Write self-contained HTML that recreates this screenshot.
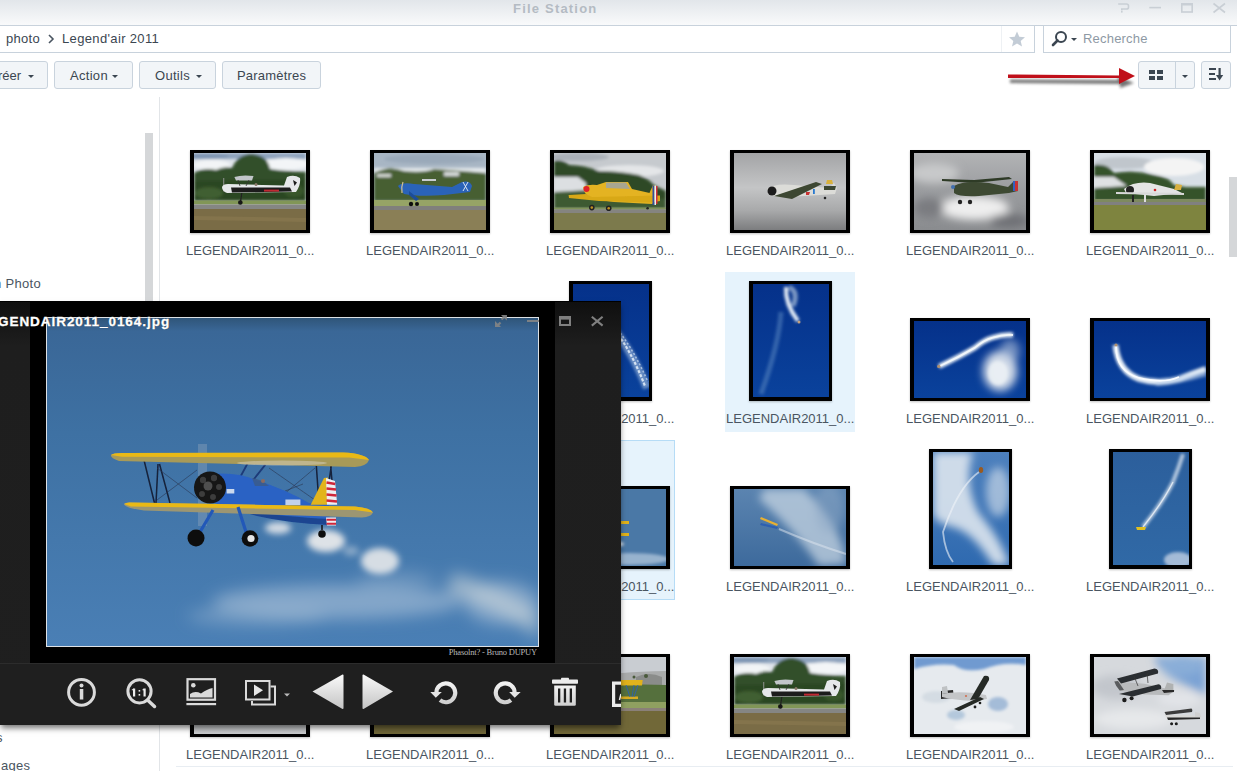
<!DOCTYPE html>
<html><head><meta charset="utf-8">
<style>
*{margin:0;padding:0;box-sizing:border-box}
html,body{width:1237px;height:771px;overflow:hidden;background:#fff;font-family:"Liberation Sans",sans-serif;position:relative}
.abs{position:absolute}
svg{display:block}
#title{left:0;top:0;width:1237px;height:26px;background:linear-gradient(#e2e6ea,#f9fafb);border-bottom:1px solid #c6d0da}
#title .t{left:513px;top:1px;font-size:13px;font-weight:bold;color:#b4bbc3;letter-spacing:1.2px}
#crumb{left:-2px;top:25px;width:1037px;height:28px;border:1px solid #c8d2dc;background:#fff}
#search{left:1043px;top:25px;width:188px;height:28px;border:1px solid #c8d2dc;background:#fff}
.txt{font-size:13px;color:#3b4651;white-space:nowrap}
.btn{height:28px;border:1px solid #c9d3dd;border-radius:3px;background:#f2f5f8;top:61px}
.btn .txt{position:absolute;top:6px}
.caret{position:absolute;width:0;height:0;border-left:3px solid transparent;border-right:3px solid transparent;border-top:3px solid #3b4651}
.sel{background:#e6f3fc}
.sel2{background:#e6f3fc;border:1px solid #b6dcf6}
.lbl{font-size:13px;color:#4a5561;white-space:nowrap;letter-spacing:0px}
.th{background:#000;box-shadow:0 1px 2px rgba(0,0,0,.25)}
.th svg{position:absolute}

</style></head><body>
<svg width="0" height="0" style="position:absolute"><defs>
<filter id="fb1" x="-20%" y="-20%" width="140%" height="140%"><feGaussianBlur stdDeviation="0.5"/></filter>
<filter id="fb2" x="-20%" y="-20%" width="140%" height="140%"><feGaussianBlur stdDeviation="1.5"/></filter>
<filter id="fb4" x="-30%" y="-30%" width="160%" height="160%"><feGaussianBlur stdDeviation="4"/></filter>
</defs></svg>
<div id="title" class="abs"><div class="t abs">File Station</div>
  <svg class="abs" style="left:1100px;top:0" width="137" height="20" viewBox="0 0 137 20">
    <g fill="none" stroke="#c9cfd5" stroke-width="1.6">
      <path d="M18.2 4 H26.5 Q28.5 4 28.5 6 V7.2 Q28.5 9 26.5 9 H21.8 V10.5"/>
      <path d="M49.3 7.6 H61"/>
      <rect x="81.8" y="4" width="10.4" height="8"/>
      <path d="M113.5 3.5 L125 12.5 M125 3.5 L113.5 12.5"/>
    </g>
    <rect x="81" y="3.1" width="12" height="2.4" fill="#c9cfd5"/>
    <rect x="21" y="11" width="1.6" height="1.6" fill="#c9cfd5"/>
  </svg>
</div>
<div id="crumb" class="abs"></div>
<div class="abs" style="left:1001px;top:26px;width:1px;height:26px;background:#eef1f4"></div>
<svg class="abs" style="left:1007px;top:30px" width="20" height="18" viewBox="0 0 20 18"><path d="M10 1.5 L12.3 6.8 L18 7.2 L13.7 10.9 L15 16.5 L10 13.5 L5 16.5 L6.3 10.9 L2 7.2 L7.7 6.8 Z" fill="#c3ccd6"/></svg>
<div class="abs txt" style="left:6px;top:31px;letter-spacing:0.3px">photo</div>
<svg class="abs" style="left:47px;top:34px" width="8" height="10" viewBox="0 0 8 10"><path d="M2 1 L6 5 L2 9" fill="none" stroke="#4a5561" stroke-width="1.6"/></svg>
<div class="abs txt" style="left:62px;top:31px;letter-spacing:0.35px">Legend'air 2011</div>
<div id="search" class="abs"></div>
<svg class="abs" style="left:1050px;top:30px" width="30" height="18" viewBox="0 0 30 18">
  <circle cx="11" cy="7" r="5" fill="none" stroke="#3b4651" stroke-width="2"/>
  <path d="M7.5 10.5 L3 15" stroke="#3b4651" stroke-width="2.6" stroke-linecap="round"/>
  <path d="M21 8 L27 8 L24 11 Z" fill="#3b4651"/>
</svg>
<div class="abs txt" style="left:1083px;top:31px;color:#8e99a4;letter-spacing:0.2px">Recherche</div>

<!-- toolbar buttons -->
<div class="abs btn" style="left:-10px;width:58px"><div class="txt" style="left:7px">réer</div><div class="caret" style="left:37px;top:13px"></div></div>
<div class="abs btn" style="left:54px;width:79px"><div class="txt" style="left:15px;letter-spacing:0.3px">Action</div><div class="caret" style="left:57px;top:13px"></div></div>
<div class="abs btn" style="left:139px;width:77px"><div class="txt" style="left:15px;letter-spacing:0.3px">Outils</div><div class="caret" style="left:56px;top:13px"></div></div>
<div class="abs btn" style="left:222px;width:99px"><div class="txt" style="left:14px;letter-spacing:0.2px">Paramètres</div></div>

<!-- right view buttons -->
<svg class="abs" style="left:1000px;top:60px" width="140" height="32" viewBox="0 0 140 32">
  <defs><filter id="ash" x="-10%" y="-50%" width="120%" height="250%"><feGaussianBlur stdDeviation="1.6"/></filter></defs>
  <g filter="url(#ash)" fill="#000" opacity="0.55">
    <path d="M10 19.5 L118 20 L118 16.5 L134 23 L120 28 L120 24 L10 23 Z"/>
  </g>
  <path d="M8 14.5 L119 15.5 L119 8 L135 16 L119 24 L119 18 L8 18 Z" fill="#c0101a"/>
</svg>
<div class="abs btn" style="left:1138px;width:57px"></div>
<div class="abs" style="left:1175px;top:62px;width:1px;height:26px;background:#c9d3dd"></div>
<div class="abs" style="left:1149px;top:70px;width:6px;height:4px;background:#3b4651"></div>
<div class="abs" style="left:1157px;top:70px;width:6px;height:4px;background:#3b4651"></div>
<div class="abs" style="left:1149px;top:76px;width:6px;height:4px;background:#3b4651"></div>
<div class="abs" style="left:1157px;top:76px;width:6px;height:4px;background:#3b4651"></div>
<div class="caret" style="left:1182px;top:75px"></div>
<div class="abs btn" style="left:1201px;width:30px"></div>
<svg class="abs" style="left:1206px;top:65px" width="20" height="20" viewBox="0 0 20 20">
  <g fill="#3b4651"><rect x="3" y="3" width="7" height="2"/><rect x="3" y="8" width="6" height="2"/><rect x="3" y="13" width="7" height="2"/>
  <rect x="12.5" y="3" width="2.2" height="9"/><path d="M10 10 L17.2 10 L13.6 15.5 Z"/></g>
</svg>

<!-- sidebar -->
<div class="abs txt" style="left:-6px;top:276px;color:#4a5561;letter-spacing:0.3px">n Photo</div>
<div class="abs txt" style="left:-4px;top:730px;color:#4a5561">s</div>
<div class="abs txt" style="left:1px;top:758px;color:#4a5561;letter-spacing:0.3px">ages</div>
<div class="abs" style="left:145px;top:133px;width:8px;height:580px;background:#d5d7d9"></div>
<div class="abs" style="left:159px;top:97px;width:1px;height:680px;background:#e2e5e8"></div>
<div class="abs" style="left:1229px;top:177px;width:8px;height:80px;background:#d5d7d9"></div>
<div class="abs" style="left:176px;top:766px;width:1057px;height:1px;background:#e8edf2"></div>

<div class="abs th" style="left:190px;top:150px;width:120px;height:83px"><svg style="left:4px;top:3px" width="112" height="77" viewBox="0 0 112 77" preserveAspectRatio="none">
<rect width="112" height="77" fill="#dfe4ea"/>
<g filter="url(#fb2)">
<rect width="112" height="6" fill="#8ea3bd"/>
<ellipse cx="10" cy="3" rx="25" ry="3" fill="#7f96b4"/>
<ellipse cx="18" cy="12" rx="18" ry="5" fill="#f2f4f6"/>
<ellipse cx="92" cy="11" rx="22" ry="6" fill="#f3f5f7"/>
<path d="M0 20 Q10 14 22 17 Q30 13 38 15 Q44 1 58 1 Q74 3 76 16 Q90 18 112 19 L112 48 L0 48 Z" fill="#33502a"/>
<path d="M0 28 L112 26 L112 48 L0 48 Z" fill="#28421f" opacity="0.7"/>
<ellipse cx="15" cy="40" rx="14" ry="6" fill="#4a6a36" opacity="0.7"/>
<ellipse cx="100" cy="38" rx="10" ry="6" fill="#3e5e30" opacity="0.7"/>
</g>
<rect y="47.5" width="112" height="4" fill="#819657"/>
<rect y="51.5" width="112" height="4.5" fill="#858684"/>
<rect y="56" width="112" height="21" fill="#7a6c46"/>
<path d="M0 63 L112 65 L112 69 L0 67Z" fill="#8a7a50" opacity="0.6"/>
<g filter="url(#fb1)">
<rect x="29" y="25" width="1.3" height="13.5" fill="#999" opacity="0.7"/>
<path d="M28 34 Q29 31 34 31 L90 32.5 L93 24 Q100 21 106 25 Q107 32 102 39 L60 39.5 L33 40 Q28 38 28 34 Z" fill="#e6e8ea"/>
<path d="M37 34.5 L96 34.5 L98 38.5 L38 39.5 Z" fill="#1a1a1a"/>
<path d="M70 36.6 L85 36.6 L85 38.6 L70 38.6 Z" fill="#c02a30"/>
<path d="M40.4 24 Q48 21.5 59.5 23 L58 27.4 L42 27.4 Z" fill="#c2c6ca"/>
<path d="M44 27 L46 33 M55 27 L52 33" stroke="#333" stroke-width="0.8"/>
<circle cx="62" cy="31.5" r="1.5" fill="#8a7a6a"/>
<path d="M47.8 40 L46.6 48" stroke="#222" stroke-width="1.2"/>
<circle cx="46.3" cy="49.5" r="2.3" fill="#151515"/>
<path d="M99 27 L103 29.5 L100.5 33 Z" fill="#1a1a1a"/>
</g>
</svg></div>
<div class="abs lbl" style="left:186px;top:243px">LEGENDAIR2011_0...</div>
<div class="abs th" style="left:370px;top:150px;width:120px;height:83px"><svg style="left:4px;top:3px" width="112" height="77" viewBox="0 0 112 77" preserveAspectRatio="none">
<rect width="112" height="77" fill="#a8b6c4"/>
<g filter="url(#fb2)">
<ellipse cx="60" cy="6" rx="50" ry="5" fill="#9aa9b9"/>
<rect y="15" width="112" height="7" fill="#e8ecef"/>
<path d="M0 20 Q15 12 30 18 Q50 20 60 16 Q90 18 112 20 L112 48 L0 48 Z" fill="#465f32"/>
<rect x="3" y="21" width="14" height="3" fill="#d8dcd8"/>
<rect x="70" y="19" width="15" height="4" fill="#d8dcdc"/>
</g>
<rect y="47" width="112" height="6" fill="#96a466"/>
<rect y="53" width="112" height="4" fill="#80807c"/>
<rect y="57" width="112" height="20" fill="#8a7f56"/>
<g filter="url(#fb1)">
<path d="M24 33 Q28 29 40 31 L78 34 L88 29 Q96 27 98 33 L96 39 L70 42 Q45 44 30 41 Z" fill="#2c64b8"/>
<path d="M35 38 L45 46 L42 48 L35 42 Z" fill="#1f4e9a"/>
<path d="M48 26 L62 26 L62 28 L48 28Z" fill="#c8ccd0"/>
<path d="M29 29 Q27 34 28 40" stroke="#d0c090" stroke-width="1.2" fill="none"/>
<circle cx="37" cy="51" r="2.2" fill="#111"/><circle cx="43" cy="51" r="2" fill="#111"/>
<path d="M89 29 L94 38 M94 29 L89 38" stroke="#e8eef6" stroke-width="0.9"/>
</g>
</svg></div>
<div class="abs lbl" style="left:366px;top:243px">LEGENDAIR2011_0...</div>
<div class="abs th" style="left:550px;top:150px;width:120px;height:83px"><svg style="left:4px;top:3px" width="112" height="77" viewBox="0 0 112 77" preserveAspectRatio="none">
<rect width="112" height="77" fill="#c6cace"/>
<g filter="url(#fb2)">
<ellipse cx="75" cy="18" rx="35" ry="6" fill="#e4e6e8"/>
<ellipse cx="25" cy="4" rx="30" ry="4" fill="#aab0b8"/>
<path d="M0 8 Q8 6 15 12 Q30 12 45 18 Q65 18 85 22 Q95 26 100 32 L112 38 L112 56 L0 56 Z" fill="#2f4827"/>
<path d="M0 24 L24 24 L32 30 L32 39 L0 39 Z" fill="#dcdfe2"/>
<path d="M0 39 L36 37 L60 45 L112 46 L112 56 L0 56 Z" fill="#3e5a30"/>
</g>
<rect y="54.5" width="112" height="2" fill="#7f925a"/>
<rect y="56.5" width="112" height="3.5" fill="#858480"/>
<rect y="60" width="112" height="17" fill="#7c7a4c"/>
<g filter="url(#fb1)">
<path d="M29 34 Q34 31 43 32 L52 29 L74 29 L78 36 L100 41 L104 46 L98 51 L60 49 L38 46 Q30 42 29 34 Z" fill="#e4b322"/>
<path d="M52 29.5 L72 29.5 L76 36 L52 35 Z" fill="#9da3a3" opacity="0.85"/>
<path d="M14.6 42 L32 41 L38 44 L106 42.5 L106 48 L98 49.6 L45 48 L15 45 Z" fill="#d8a818"/>
<circle cx="32.5" cy="36" r="3" fill="#e0202a"/>
<path d="M95 41 L99 32 L102 33 L102 42 Z" fill="#e2b020"/>
<path d="M98.5 32.5 L100.5 32.5 L100.5 52 L98.5 52 Z" fill="#3050a0"/>
<path d="M100.5 32.5 L102 32.5 L102 52 L100.5 52Z" fill="#f0f0f0"/><path d="M102 33 L103.5 33 L103.5 51 L102 51Z" fill="#d0303a"/>
<circle cx="37.8" cy="54.6" r="2.8" fill="#222"/><circle cx="37.8" cy="54.6" r="1.3" fill="#c09020"/>
<circle cx="54.7" cy="55.2" r="2.8" fill="#222"/><circle cx="54.7" cy="55.2" r="1.3" fill="#c09020"/>
<circle cx="93.6" cy="55.2" r="1.3" fill="#222"/>
</g>
</svg></div>
<div class="abs lbl" style="left:546px;top:243px">LEGENDAIR2011_0...</div>
<div class="abs th" style="left:730px;top:150px;width:120px;height:83px"><svg style="left:4px;top:3px" width="112" height="77" viewBox="0 0 112 77" preserveAspectRatio="none">
<defs><linearGradient id="g4" x1="0" y1="0" x2="0" y2="1"><stop offset="0" stop-color="#a3a4a6"/><stop offset="0.45" stop-color="#c4c5c6"/><stop offset="0.75" stop-color="#a8a9aa"/><stop offset="1" stop-color="#7c7d7f"/></linearGradient></defs>
<rect width="112" height="77" fill="url(#g4)"/>
<g filter="url(#fb1)">
<path d="M33 36 Q40 30 60 32 L95 35 L100 30 L103 35 L101 41 L70 43 Q45 45 35 42 Z" fill="#dcdcd8"/>
<circle cx="38" cy="38" r="4.5" fill="#1c1c1c"/>
<path d="M40 43 L82 29 L88 31 L58 46 Z" fill="#3d4630"/>
<path d="M90 33 L102 33 L101 37 L90 37Z" fill="#3d4630"/>
<path d="M93 27 L98 27 L99 31 L92 31Z" fill="#d9b13a"/>
<rect x="79" y="36" width="1.8" height="5" fill="#2a7ad0"/>
<path d="M72 39 L76 39 L75 42 L72 42Z" fill="#c83030"/>
<circle cx="91" cy="45" r="1.3" fill="#222"/>
</g>
</svg></div>
<div class="abs lbl" style="left:726px;top:243px">LEGENDAIR2011_0...</div>
<div class="abs th" style="left:910px;top:150px;width:120px;height:83px"><svg style="left:4px;top:3px" width="112" height="77" viewBox="0 0 112 77" preserveAspectRatio="none">
<defs><linearGradient id="g5" x1="0" y1="0" x2="0" y2="1"><stop offset="0" stop-color="#b2b3b5"/><stop offset="0.5" stop-color="#9a9c9f"/><stop offset="1" stop-color="#8a8c8f"/></linearGradient></defs>
<rect width="112" height="77" fill="url(#g5)"/>
<g filter="url(#fb4)">
<ellipse cx="60" cy="55" rx="35" ry="12" fill="#eeeeee"/>
<ellipse cx="20" cy="20" rx="25" ry="10" fill="#c8c9ca"/>
<ellipse cx="95" cy="68" rx="20" ry="7" fill="#6e7074"/>
<ellipse cx="15" cy="55" rx="15" ry="10" fill="#7a7c80"/>
</g>
<g filter="url(#fb1)">
<path d="M28 26 L60 27 L95 24 L98 26 L60 30 L28 28 Z" fill="#2f3a28"/>
<path d="M40 33 Q50 27 75 30 L94 34 L100 28 L104 38 L95 40 L65 43 Q45 44 40 40 Z" fill="#3d4a33"/>
<circle cx="39" cy="34" r="2" fill="#4070b0"/>
<circle cx="46" cy="49" r="2.2" fill="#222"/><circle cx="56" cy="49" r="2.2" fill="#222"/>
<path d="M101 28 L104 28 L104 38 L101 38Z" fill="#c83030"/>
<path d="M99 28 L101 28 L101 38 L99 38Z" fill="#3060c0"/>
</g>
</svg></div>
<div class="abs lbl" style="left:906px;top:243px">LEGENDAIR2011_0...</div>
<div class="abs th" style="left:1090px;top:150px;width:120px;height:83px"><svg style="left:4px;top:3px" width="112" height="77" viewBox="0 0 112 77" preserveAspectRatio="none">
<rect width="112" height="77" fill="#d8dfe6"/>
<g filter="url(#fb2)">
<ellipse cx="30" cy="10" rx="30" ry="6" fill="#c0c6cc"/>
<ellipse cx="80" cy="14" rx="30" ry="9" fill="#f4f4f4"/>
<path d="M0 12 Q14 10 20 20 Q40 16 60 22 Q75 24 80 32 L92 34 L112 34 L112 48 L0 48 Z" fill="#36532a"/>
<path d="M0 24 L20 24 L33 33 L0 35 Z" fill="#dfe1e3"/>
</g>
<rect y="46" width="112" height="3" fill="#7e8a60"/>
<rect y="49" width="112" height="3" fill="#808080"/>
<rect y="52" width="112" height="25" fill="#7e843f"/>
<g filter="url(#fb1)">
<path d="M30 36 Q40 28 56 30 L80 36 L88 40 L60 43 L32 40 Z" fill="#e4e4e4"/>
<circle cx="36" cy="37" r="4" fill="#222"/>
<path d="M22 39 L90 40 L90 42 L22 41Z" fill="#d8d8d8"/>
<path d="M82 31 L88 32 L87 37 L80 37Z" fill="#d8b040"/>
<circle cx="61" cy="37" r="1.3" fill="#d02020"/>
<rect x="38" y="42" width="2" height="7" fill="#222"/><rect x="50" y="42" width="2" height="7" fill="#ddd"/>
</g>
</svg></div>
<div class="abs lbl" style="left:1086px;top:243px">LEGENDAIR2011_0...</div>
<div class="abs th" style="left:190px;top:318px;width:120px;height:83px"><svg style="left:4px;top:3px" width="112" height="77" viewBox="0 0 112 77" preserveAspectRatio="none"></svg></div>
<div class="abs lbl" style="left:186px;top:411px">LEGENDAIR2011_0...</div>
<div class="abs th" style="left:370px;top:318px;width:120px;height:83px"><svg style="left:4px;top:3px" width="112" height="77" viewBox="0 0 112 77" preserveAspectRatio="none"></svg></div>
<div class="abs lbl" style="left:366px;top:411px">LEGENDAIR2011_0...</div>
<div class="abs th" style="left:569px;top:281px;width:83px;height:120px"><svg style="left:4px;top:3px" width="76" height="113" viewBox="0 0 76 113" preserveAspectRatio="none"><defs><linearGradient id="gp1" x1="0" y1="0" x2="0" y2="1"><stop offset="0" stop-color="#05318a"/><stop offset="1" stop-color="#0a429c"/></linearGradient></defs>
<rect width="76" height="113" fill="url(#gp1)"/>
<g filter="url(#fb2)" fill="none" stroke="#b8d0ea">
<path d="M38 42 Q58 65 74 104" stroke-width="8" opacity="0.55"/>
</g>
<g filter="url(#fb1)" fill="none" stroke="#e6f0fa"><path d="M40 44 Q58 66 72 102" stroke-width="2.2" opacity="0.85" stroke-dasharray="3 1.5"/><path d="M45 46 Q62 68 75 98" stroke-width="1.5" opacity="0.6" stroke-dasharray="2 2"/></g>
</svg></div>
<div class="abs lbl" style="left:546px;top:411px">LEGENDAIR2011_0...</div>
<div class="abs sel" style="left:725px;top:272px;width:130px;height:160px"></div>
<div class="abs th" style="left:749px;top:281px;width:83px;height:120px"><svg style="left:4px;top:3px" width="76" height="113" viewBox="0 0 76 113" preserveAspectRatio="none"><defs><linearGradient id="gp2" x1="0" y1="0" x2="0" y2="1"><stop offset="0" stop-color="#05318a"/><stop offset="1" stop-color="#0a429c"/></linearGradient></defs>
<rect width="76" height="113" fill="url(#gp2)"/>
<g filter="url(#fb2)" fill="none">
<path d="M33 3 Q32 20 45 37" stroke="#e8f0f8" stroke-width="4"/>
<path d="M36 3 Q46 8 40 22" stroke="#c8d8e8" stroke-width="5" opacity="0.6"/>
<path d="M28 28 Q26 60 8 110" stroke="#5d8cc4" stroke-width="5" opacity="0.5"/>
</g>
<circle cx="46" cy="38" r="1.5" fill="#c0a080"/>
</svg></div>
<div class="abs lbl" style="left:726px;top:411px">LEGENDAIR2011_0...</div>
<div class="abs th" style="left:910px;top:318px;width:120px;height:83px"><svg style="left:4px;top:3px" width="112" height="77" viewBox="0 0 112 77" preserveAspectRatio="none"><defs><linearGradient id="gt7" x1="0" y1="0" x2="0" y2="1"><stop offset="0" stop-color="#05318a"/><stop offset="1" stop-color="#0a429c"/></linearGradient></defs>
<rect width="112" height="77" fill="url(#gt7)"/>
<g filter="url(#fb4)">
<ellipse cx="86" cy="50" rx="17" ry="20" fill="#dfe6ee" opacity="0.95"/>
<ellipse cx="96" cy="30" rx="10" ry="12" fill="#b8c8e0" opacity="0.6"/>
</g>
<g filter="url(#fb2)">
<ellipse cx="84" cy="52" rx="10" ry="12" fill="#eef2f6" opacity="0.8"/>
</g>
<g filter="url(#fb2)" fill="none">
<path d="M25 45.4 Q45 36 61 26.6 Q70 19 78.7 16.6 Q90 13 99 14" stroke="#e8f0f8" stroke-width="5"/>
</g>
<g filter="url(#fb1)" fill="none"><path d="M26 45 Q45 36 61 26.6 Q70 19 78.7 16.6 Q90 13 99 14" stroke="#f4f8fc" stroke-width="1.8" opacity="0.9"/></g>
<circle cx="24.8" cy="45.4" r="1.7" fill="#b09070"/>
</svg></div>
<div class="abs lbl" style="left:906px;top:411px">LEGENDAIR2011_0...</div>
<div class="abs th" style="left:1090px;top:318px;width:120px;height:83px"><svg style="left:4px;top:3px" width="112" height="77" viewBox="0 0 112 77" preserveAspectRatio="none"><defs><linearGradient id="gt8" x1="0" y1="0" x2="0" y2="1"><stop offset="0" stop-color="#05318a"/><stop offset="1" stop-color="#0a429c"/></linearGradient></defs>
<rect width="112" height="77" fill="url(#gt8)"/>
<g filter="url(#fb2)" fill="none">
<path d="M21.5 24 Q24 50 45 58 Q65 64 85 58 Q100 52 112 48" stroke="#e8f0f8" stroke-width="6"/>
<path d="M62 62 Q85 60 112 52" stroke="#c0d4ec" stroke-width="6" opacity="0.6"/>
</g>
<g filter="url(#fb1)" fill="none"><path d="M22 25 Q22 50 45 57 Q70 63 85 56" stroke="#f8fbff" stroke-width="1.8"/></g>
<circle cx="22" cy="24" r="1.6" fill="#b09070"/>
</svg></div>
<div class="abs lbl" style="left:1086px;top:411px">LEGENDAIR2011_0...</div>
<div class="abs th" style="left:190px;top:486px;width:120px;height:83px"><svg style="left:4px;top:3px" width="112" height="77" viewBox="0 0 112 77" preserveAspectRatio="none"></svg></div>
<div class="abs lbl" style="left:186px;top:579px">LEGENDAIR2011_0...</div>
<div class="abs th" style="left:370px;top:486px;width:120px;height:83px"><svg style="left:4px;top:3px" width="112" height="77" viewBox="0 0 112 77" preserveAspectRatio="none"></svg></div>
<div class="abs lbl" style="left:366px;top:579px">LEGENDAIR2011_0...</div>
<div class="abs sel2" style="left:545px;top:440px;width:130px;height:160px"></div>
<div class="abs th" style="left:550px;top:486px;width:120px;height:83px"><svg style="left:4px;top:3px" width="112" height="77" viewBox="0 0 112 77" preserveAspectRatio="none">
<rect width="112" height="77" fill="#4a78a6"/>
<g filter="url(#fb2)"><ellipse cx="75" cy="70" rx="40" ry="6" fill="#b8cce0" opacity="0.7"/><ellipse cx="60" cy="55" rx="10" ry="3" fill="#dfe6ec"/></g>
<g filter="url(#fb1)">
<path d="M15 32 L75 32 L75 35 L15 35Z" fill="#e0b21c"/>
<path d="M17 44 L75 44 L75 47 L17 47Z" fill="#e0b21c"/>
<path d="M35 38 L65 42 L65 46 L35 44Z" fill="#2456a8"/>
</g>
</svg></div>
<div class="abs lbl" style="left:546px;top:579px">LEGENDAIR2011_0...</div>
<div class="abs th" style="left:730px;top:486px;width:120px;height:83px"><svg style="left:4px;top:3px" width="112" height="77" viewBox="0 0 112 77" preserveAspectRatio="none">
<defs><linearGradient id="gt10" x1="0" y1="0" x2="0" y2="1"><stop offset="0" stop-color="#5b84b0"/><stop offset="1" stop-color="#3d6a9c"/></linearGradient></defs>
<rect width="112" height="77" fill="url(#gt10)"/>
<g filter="url(#fb4)" fill="#c6d4e2">
<path d="M30 0 L70 0 Q110 40 112 75 L85 77 Q60 40 25 10 Z" opacity="0.75"/>
<ellipse cx="95" cy="20" rx="15" ry="25" fill="#8fa9c8" opacity="0.5"/>
</g>
<g filter="url(#fb1)" fill="none"><path d="M45 40 Q80 55 112 65" stroke="#e0e8f0" stroke-width="2" opacity="0.5"/></g>
<g filter="url(#fb1)">
<path d="M27 28 L44 35 L43 37 L26 30Z" fill="#e8b030"/>
<path d="M27 34 L44 38 L43 40 L26 36Z" fill="#2e5fb0"/>
</g>
</svg></div>
<div class="abs lbl" style="left:726px;top:579px">LEGENDAIR2011_0...</div>
<div class="abs th" style="left:929px;top:449px;width:83px;height:120px"><svg style="left:4px;top:3px" width="76" height="113" viewBox="0 0 76 113" preserveAspectRatio="none">
<defs><linearGradient id="gp3" x1="0" y1="0" x2="0" y2="1"><stop offset="0" stop-color="#4d80bd"/><stop offset="1" stop-color="#2f6ab0"/></linearGradient></defs>
<rect width="76" height="113" fill="url(#gp3)"/>
<g filter="url(#fb4)" fill="#dde6ee">
<path d="M0 0 L40 0 Q30 30 45 60 Q70 90 76 113 L60 113 Q40 80 20 75 Q0 70 0 60 Z" opacity="0.9"/>
<ellipse cx="65" cy="40" rx="12" ry="25" opacity="0.6"/>
</g>
<g filter="url(#fb1)" fill="none"><path d="M46 20 Q25 35 10 80 Q12 100 20 110" stroke="#f0f4f8" stroke-width="1.8" opacity="0.6"/></g>
<ellipse cx="48" cy="18" rx="2.2" ry="3" fill="#9a5a20"/>
</svg></div>
<div class="abs lbl" style="left:906px;top:579px">LEGENDAIR2011_0...</div>
<div class="abs th" style="left:1109px;top:449px;width:83px;height:120px"><svg style="left:4px;top:3px" width="76" height="113" viewBox="0 0 76 113" preserveAspectRatio="none">
<defs><linearGradient id="gp4" x1="0" y1="0" x2="0" y2="1"><stop offset="0" stop-color="#2c5f9c"/><stop offset="1" stop-color="#3069a6"/></linearGradient></defs>
<rect width="76" height="113" fill="url(#gp4)"/>
<g filter="url(#fb2)"><ellipse cx="65" cy="108" rx="14" ry="8" fill="#c0d0e4" opacity="0.8"/></g>
<g filter="url(#fb2)" fill="none"><path d="M30 75 Q50 50 60 30 Q66 15 70 2" stroke="#d8e4f0" stroke-width="4" opacity="0.8"/></g><g filter="url(#fb1)" fill="none"><path d="M30 75 Q50 50 60 30" stroke="#eef4fa" stroke-width="1.3" opacity="0.8"/></g>
<path d="M23 75 L33 75 L32 78 L24 78Z" fill="#e0c020"/>
</svg></div>
<div class="abs lbl" style="left:1086px;top:579px">LEGENDAIR2011_0...</div>
<div class="abs th" style="left:190px;top:654px;width:120px;height:83px"><svg style="left:4px;top:3px" width="112" height="77" viewBox="0 0 112 77" preserveAspectRatio="none">
<defs><linearGradient id="gt11" x1="0" y1="0" x2="0" y2="1"><stop offset="0" stop-color="#a8b0b8"/><stop offset="0.6" stop-color="#b8bcc0"/><stop offset="1" stop-color="#c8cacc"/></linearGradient></defs>
<rect width="112" height="77" fill="url(#gt11)"/>
</svg></div>
<div class="abs lbl" style="left:186px;top:747px">LEGENDAIR2011_0...</div>
<div class="abs th" style="left:370px;top:654px;width:120px;height:83px"><svg style="left:4px;top:3px" width="112" height="77" viewBox="0 0 112 77" preserveAspectRatio="none">
<rect width="112" height="77" fill="#6f6638"/>
</svg></div>
<div class="abs lbl" style="left:366px;top:747px">LEGENDAIR2011_0...</div>
<div class="abs th" style="left:550px;top:654px;width:120px;height:83px"><svg style="left:4px;top:3px" width="112" height="77" viewBox="0 0 112 77" preserveAspectRatio="none">
<rect width="112" height="77" fill="#c9cdd2"/>
<g filter="url(#fb1)">
<path d="M40 30 L40 20 Q60 15 112 14 L112 32 Z" fill="#a9abab"/>
<path d="M82 20 Q95 14 108 20 L108 32 L82 32 Z" fill="#8a8c8a"/>
<circle cx="92" cy="19" r="2" fill="#4a5a3a"/><circle cx="80" cy="20" r="1.5" fill="#4a5a3a"/>
<path d="M0 30 Q40 26 112 28 L112 46 L0 46 Z" fill="#55703c"/>
</g>
<rect y="45" width="112" height="6" fill="#8fa060"/>
<rect y="51" width="112" height="3" fill="#8a8078"/>
<rect y="54" width="112" height="23" fill="#716838"/>
<g filter="url(#fb1)">
<path d="M40 23 L88.7 23 L88 28.5 L40 28.5 Z" fill="#e0b21c"/>
<path d="M40 39.4 L84 39.4 L84 42 L40 42 Z" fill="#d8ac20"/>
<path d="M72 28 L76 40 M80 28 L78 40 M84 28 L80 40" stroke="#2d62b0" stroke-width="0.9"/>
</g>
</svg></div>
<div class="abs lbl" style="left:546px;top:747px">LEGENDAIR2011_0...</div>
<div class="abs th" style="left:730px;top:654px;width:120px;height:83px"><svg style="left:4px;top:3px" width="112" height="77" viewBox="0 0 112 77" preserveAspectRatio="none">
<rect width="112" height="77" fill="#dfe4ea"/>
<g filter="url(#fb2)">
<rect width="112" height="6" fill="#8ea3bd"/>
<ellipse cx="10" cy="3" rx="25" ry="3" fill="#7f96b4"/>
<ellipse cx="18" cy="12" rx="18" ry="5" fill="#f2f4f6"/>
<ellipse cx="92" cy="11" rx="22" ry="6" fill="#f3f5f7"/>
<path d="M0 20 Q10 14 22 17 Q30 13 38 15 Q44 1 58 1 Q74 3 76 16 Q90 18 112 19 L112 48 L0 48 Z" fill="#33502a"/>
<path d="M0 28 L112 26 L112 48 L0 48 Z" fill="#28421f" opacity="0.7"/>
<ellipse cx="15" cy="40" rx="14" ry="6" fill="#4a6a36" opacity="0.7"/>
<ellipse cx="100" cy="38" rx="10" ry="6" fill="#3e5e30" opacity="0.7"/>
</g>
<rect y="47.5" width="112" height="4" fill="#819657"/>
<rect y="51.5" width="112" height="4.5" fill="#858684"/>
<rect y="56" width="112" height="21" fill="#7a6c46"/>
<path d="M0 63 L112 65 L112 69 L0 67Z" fill="#8a7a50" opacity="0.6"/>
<g filter="url(#fb1)">
<rect x="29" y="25" width="1.3" height="13.5" fill="#999" opacity="0.7"/>
<path d="M28 34 Q29 31 34 31 L90 32.5 L93 24 Q100 21 106 25 Q107 32 102 39 L60 39.5 L33 40 Q28 38 28 34 Z" fill="#e6e8ea"/>
<path d="M37 34.5 L96 34.5 L98 38.5 L38 39.5 Z" fill="#1a1a1a"/>
<path d="M70 36.6 L85 36.6 L85 38.6 L70 38.6 Z" fill="#c02a30"/>
<path d="M40.4 24 Q48 21.5 59.5 23 L58 27.4 L42 27.4 Z" fill="#c2c6ca"/>
<path d="M44 27 L46 33 M55 27 L52 33" stroke="#333" stroke-width="0.8"/>
<circle cx="62" cy="31.5" r="1.5" fill="#8a7a6a"/>
<path d="M47.8 40 L46.6 48" stroke="#222" stroke-width="1.2"/>
<circle cx="46.3" cy="49.5" r="2.3" fill="#151515"/>
<path d="M99 27 L103 29.5 L100.5 33 Z" fill="#1a1a1a"/>
</g>
</svg></div>
<div class="abs lbl" style="left:726px;top:747px">LEGENDAIR2011_0...</div>
<div class="abs th" style="left:910px;top:654px;width:120px;height:83px"><svg style="left:4px;top:3px" width="112" height="77" viewBox="0 0 112 77" preserveAspectRatio="none">
<rect width="112" height="77" fill="#e6eaee"/>
<g filter="url(#fb2)">
<path d="M0 0 L112 0 L112 8 Q90 4 70 12 Q50 16 40 8 Q20 6 0 12 Z" fill="#6f9ad0"/>
<ellipse cx="84" cy="47" rx="10" ry="7" fill="#a4bcd8"/>
<ellipse cx="42" cy="58" rx="9" ry="5" fill="#b4c8dc"/>
<ellipse cx="22" cy="40" rx="14" ry="6" fill="#d0d8e0" opacity="0.8"/>
<ellipse cx="70" cy="70" rx="30" ry="6" fill="#f0f2f4"/>
</g>
<g filter="url(#fb1)">
<path d="M27 34 L39 33 L40 41 L27 42 Z" fill="#2c2c2c"/>
<path d="M28 30 L33 29 L34 36 L28 37 Z" fill="#bfc2c4"/>
<path d="M28 37 Q40 34 60 36 L72 38 L73 42 L60 44 Q40 43 28 40 Z" fill="#c4c6c8"/>
<path d="M70 19 Q76 18 75 23 L64 42 L56 43 Z" fill="#262a26"/>
<path d="M66 40 L70 42 L45 54 L40 52 Z" fill="#262a26"/>
<circle cx="52" cy="39" r="1.1" fill="#d07050"/>
<circle cx="61" cy="50" r="1.4" fill="#1a1a1a"/><circle cx="66" cy="46" r="1.3" fill="#1a1a1a"/>
</g>
</svg></div>
<div class="abs lbl" style="left:906px;top:747px">LEGENDAIR2011_0...</div>
<div class="abs th" style="left:1090px;top:654px;width:120px;height:83px"><svg style="left:4px;top:3px" width="112" height="77" viewBox="0 0 112 77" preserveAspectRatio="none">
<rect width="112" height="77" fill="#d6d9dd"/>
<g filter="url(#fb4)">
<path d="M60 0 L112 0 L112 38 Q95 30 80 22 Q65 14 60 0 Z" fill="#7aa2d4"/>
<ellipse cx="88" cy="8" rx="22" ry="10" fill="#8aaed8"/>
<ellipse cx="22" cy="30" rx="25" ry="12" fill="#c2c6cc"/>
<ellipse cx="40" cy="62" rx="40" ry="10" fill="#e6e8ea"/>
<ellipse cx="85" cy="42" rx="22" ry="8" fill="#e2e4e8"/>
</g>
<g filter="url(#fb1)">
<path d="M20.3 24.5 L50.7 26.8 L77 32.8 L81 33.4 L74.6 38.2 L50.7 37.6 L25.7 33.4 Z" fill="#b8babc"/>
<path d="M20.3 24.5 Q22 30 25.7 33.4 L30 33 L24 24 Z" fill="#5a5c5e"/>
<path d="M69.8 34 L73 25.6 L79.4 27 L79.4 34 Z" fill="#b0b2b2"/>
<path d="M68 33 L80 33 L80 35 L70 36 Z" fill="#2a2a2a"/>
<path d="M23 21.5 L60.5 11.5 Q65 12 64 16.5 L27 26.5 Z" fill="#2c2e30"/>
<path d="M25 37 L64.5 27.2 Q68 28 67 31.9 L38.8 39.5 Z" fill="#2c2e30"/>
<path d="M40 19 L44 29 M53 16 L54 26" stroke="#333" stroke-width="0.7"/>
<circle cx="30.4" cy="43" r="2.2" fill="#1a1a1a"/><circle cx="37.6" cy="41.2" r="2" fill="#1a1a1a"/>
<path d="M70.5 55 L97.5 51.5 Q99 52.5 98 55 L72 58 Z" fill="#3a3a3a"/>
<path d="M71 58 L95 58 L107.4 60 L106 62 L74 63 Z" fill="#d8d8d6"/>
<path d="M73 60.5 L106 60.5 L106 62 L74 63 Z" fill="#262626"/>
<path d="M101 55 L106 56 L107 60 L101 60 Z" fill="#d0d0d0"/>
<circle cx="77.6" cy="66.8" r="1.5" fill="#1a1a1a"/><circle cx="82.3" cy="66.8" r="1.5" fill="#1a1a1a"/>
</g>
</svg></div>
<div class="abs lbl" style="left:1086px;top:747px">LEGENDAIR2011_0...</div>
<div id="viewer" class="abs" style="left:0;top:301px;width:621px;height:424px;background:linear-gradient(#0f0f0f 0px,#1e1e1e 45px,#1f1f1f 100%);box-shadow:0 4px 6px -1px rgba(0,0,0,.55)">
  <div class="abs" style="left:0;top:0;width:621px;height:1px;background:#000"></div>
  <div class="abs" style="left:30px;top:0;width:525px;height:362px;background:#000"></div>
  <div class="abs" style="left:46px;top:16px;width:493px;height:330px;border:1px solid #dde1e5;overflow:hidden">
    <svg width="492" height="329" viewBox="0 0 492 329">
      <defs>
        <linearGradient id="sky" x1="0" y1="0" x2="0" y2="1">
          <stop offset="0" stop-color="#2f5579"/>
          <stop offset="0.04" stop-color="#3a6797"/>
          <stop offset="0.35" stop-color="#3e71a3"/>
          <stop offset="1" stop-color="#4a7fb5"/>
        </linearGradient>
        <filter id="bl6" x="-50%" y="-50%" width="200%" height="200%"><feGaussianBlur stdDeviation="8"/></filter>
        <filter id="bl3" x="-50%" y="-50%" width="200%" height="200%"><feGaussianBlur stdDeviation="3"/></filter>
        <filter id="bl1" x="-50%" y="-50%" width="200%" height="200%"><feGaussianBlur stdDeviation="0.7"/></filter>
      </defs>
      <rect width="492" height="329" fill="url(#sky)"/>
      <!-- haze clouds -->
      <g filter="url(#bl6)" fill="#b4c8dc">
        <ellipse cx="290" cy="284" rx="125" ry="17" opacity="0.55"/>
        <ellipse cx="210" cy="298" rx="70" ry="10" opacity="0.35"/>
        <ellipse cx="455" cy="285" rx="38" ry="22" opacity="0.5"/>
        <path d="M405 255 Q450 265 492 295 L492 320 Q450 290 400 275 Z" fill="#d0d8dc" opacity="0.6"/>
        <ellipse cx="350" cy="262" rx="40" ry="9" opacity="0.3"/>
      </g>
      <g filter="url(#bl3)">
        <ellipse cx="231" cy="210" rx="13" ry="6" fill="#e2e6ea" opacity="0.9"/>
        <ellipse cx="279" cy="223" rx="19" ry="11" fill="#e6e8ea" opacity="0.95"/>
        <ellipse cx="333" cy="243" rx="19" ry="13" fill="#e6e8ea" opacity="0.9"/>
        <ellipse cx="304" cy="233" rx="8" ry="5" fill="#c8d4e0" opacity="0.5"/>
        
      </g>
      <!-- plane -->
      <g filter="url(#bl1)">
        <rect x="151" y="126" width="9" height="82" fill="#a9b4bf" opacity="0.3"/>
        <g stroke="#15203a" stroke-width="1.5" fill="none">
          <path d="M96.5 140 L107.5 185 M111 146 L109 185 M112.5 146 L123 185"/>
          <path d="M268.8 140 L272 186 M285 143.5 L278.5 186 M283.5 146 L287 186"/>
        </g>
        <g stroke="#1e3a78" stroke-width="1.8" fill="none"><path d="M203 141 L190 165 M218.4 146.6 L203 166"/></g>
        <g stroke="#2a3550" stroke-width="0.6" fill="none">
          <path d="M110 150 L150 180 M110 182 L150 152 M222 150 L268 182 M230 182 L268 150 M238 173 L256 166"/>
        </g>
        <!-- top wing -->
        <path d="M64 137 Q66 135 75 135 L296 134.5 Q318 135.5 322 142 Q320 148 308 149 L72 143 Q63 140 64 137 Z" fill="#a89a58"/>
        <ellipse cx="235" cy="145" rx="45" ry="2.5" fill="#cfc8b0" opacity="0.6"/>
        <path d="M64 137 Q66 135 75 135 L296 134.5 Q318 135.5 322 142 L302 139.5 L75 138.8 Z" fill="#e9b919"/>
        <!-- fuselage -->
        <path d="M165 156 Q190 154 209 162 Q240 172 262 185 L282 186 L283 207 Q250 205 222 199 Q195 193 175 188 Q160 182 158 170 Z" fill="#2a62c4"/>
        <path d="M175 188 Q210 197 283 201 L283 207 Q240 205 210 198 Z" fill="#1a4590"/>
        <path d="M205 160 Q214 161 222 168 L208 168 Z" fill="#3d5a86" opacity="0.8"/>
        <circle cx="216" cy="163" r="2" fill="#8a6a60"/>
        <!-- tail -->
        <path d="M263.7 186.7 L277 160 L281 159.5 L280 186.7 Z" fill="#e2b41c"/>
        <path d="M279 160 L288 163 L290.2 186.7 L280 186.7 Z" fill="#efeff2"/>
        <g stroke="#d0283a" stroke-width="2.3"><path d="M279.5 164.5 L288.2 166 M279.5 170.5 L289 171.5 M279.5 176.5 L289.5 177.5 M279.5 182.5 L290 183.5"/></g>
        <path d="M279 199.6 L289 199.6 L289 207.4 L280 207.4 Z" fill="#efeff2"/>
        <g stroke="#d0283a" stroke-width="2"><path d="M279.5 201.8 L289 201.8 M279.5 205.8 L289 205.8"/></g>
        <!-- engine -->
        <circle cx="163" cy="169.5" r="16" fill="#141414"/>
        <g fill="#3c3c3c"><circle cx="156" cy="162" r="3.2"/><circle cx="167" cy="160" r="3.2"/><circle cx="172" cy="169" r="3"/><circle cx="166" cy="179" r="3"/><circle cx="155" cy="176" r="3"/></g>
        <circle cx="161" cy="168" r="4.5" fill="#6a6a6a" opacity="0.7"/>
        <!-- lower wing -->
        <path d="M77 186 Q79 184 84 184.5 L308 188.5 Q324 190 326 194.5 Q324 199 315 199.5 L97 192.5 Q78 190 77 186 Z" fill="#9c9672"/>
        <path d="M77 186 Q79 184 84 184.5 L308 188.5 Q324 190 326 194.5 L308 192 L84 188.5 Z" fill="#e9b919"/>
        <!-- gear -->
        <g stroke="#2258b8" stroke-width="3.2" fill="none"><path d="M166 192 L153 214 M191 189 L199 214"/></g>
        <circle cx="149" cy="220" r="8.5" fill="#111"/>
        <circle cx="203" cy="220.5" r="8.3" fill="#111"/><circle cx="204" cy="220.5" r="3.6" fill="#e6e6e6"/>
        <path d="M275 207 L275 212" stroke="#111" stroke-width="1.5"/>
        <circle cx="275" cy="216" r="3.8" fill="#111"/>
        <!-- text on fuselage -->
        <path d="M179.6 171 h7.7 v4.5 h-7.7z" fill="#e8eef6" opacity="0.85"/>
        <path d="M238.4 181.5 h15 v5.5 h-15z" fill="#e8eef6" opacity="0.8"/>
      </g>
    </svg>
  </div>
  <div class="abs" style="left:-2px;top:13px;font-size:13.5px;font-weight:bold;color:#fff;white-space:nowrap;letter-spacing:0.95px;-webkit-text-stroke:0.35px #fff;text-shadow:0 0 1px #000">GENDAIR2011_0164.jpg</div>
  <div class="abs" style="right:84px;top:346px;font-family:'Liberation Serif',serif;font-size:8.5px;color:#b8b8b8;white-space:nowrap;letter-spacing:-0.2px">Phasolnt? - Bruno DUPUY</div>
  <!-- window controls -->
  <svg class="abs" style="left:490px;top:10px" width="131" height="20" viewBox="0 0 131 20">
    <g fill="#858585" opacity="0.9">
      <path d="M5 10 L5 16 L11 16 L9.3 14.3 L11.3 12.3 L9.7 10.7 L7.7 12.7 Z"/><path d="M17 4 L11 4 L12.7 5.7 L10.7 7.7 L12.3 9.3 L14.3 7.3 L16.8 9.5 Z"/>
      <rect x="37" y="9" width="12" height="2"/>
    </g>
    <g fill="none" stroke="#808080" stroke-width="2">
      <rect x="70" y="6" width="10" height="8"/>
    </g>
    <rect x="69" y="5" width="12" height="3.6" fill="#808080"/>
    <path d="M101.8 5.8 L112.6 14.6 M112.6 5.8 L101.8 14.6" stroke="#808080" stroke-width="2.1"/>
  </svg>
  <!-- toolbar -->
  <div class="abs" style="left:0;top:362px;width:621px;height:62px;background:#1f1f1f;border-top:1px solid #2c2c2c">
    <svg class="abs" style="left:0;top:-1px" width="621" height="62" viewBox="0 0 621 62">
      <defs>
        <linearGradient id="tri" x1="0" y1="0" x2="0" y2="1"><stop offset="0" stop-color="#fafafa"/><stop offset="1" stop-color="#c4c4c4"/></linearGradient>
        <linearGradient id="ico" x1="0" y1="0" x2="0" y2="1"><stop offset="0" stop-color="#f2f2f2"/><stop offset="1" stop-color="#cfcfcf"/></linearGradient>
      </defs>
      <g fill="none" stroke="#dadada" stroke-width="3">
        <circle cx="81.5" cy="29.3" r="12.9"/>
        <circle cx="139.5" cy="28.3" r="11.6"/>
      </g>
      <rect x="79.8" y="26" width="3.5" height="10.5" fill="#dadada"/>
      <circle cx="81.5" cy="22.6" r="2" fill="#dadada"/>
      <path d="M147.5 37 L154.5 43.5" stroke="#dadada" stroke-width="3.5" stroke-linecap="round"/>
      <g fill="#ececec">
        <rect x="133" y="25.5" width="2.2" height="8"/><path d="M131.5 27 L133.5 25.5 L133.5 27.5Z"/>
        <rect x="138.6" y="27" width="1.6" height="1.6"/><rect x="138.6" y="31" width="1.6" height="1.6"/>
        <rect x="143.5" y="25.5" width="2.2" height="8"/><path d="M142 27 L144 25.5 L144 27.5Z"/>
      </g>
      <!-- image icon -->
      <rect x="187.5" y="16.2" width="27.5" height="20.5" fill="none" stroke="#dadada" stroke-width="2.2"/>
      <rect x="186.4" y="40" width="29.7" height="2.2" fill="#dadada"/>
      <circle cx="193.3" cy="22.3" r="2.3" fill="#dadada"/>
      <path d="M190 34.5 L190 31 Q195 27.5 201 30.5 Q207 26 212.5 25 L212.5 34.5 Z" fill="#dadada"/>
      <!-- slideshow -->
      <rect x="246" y="18" width="23.5" height="18.5" fill="none" stroke="#dadada" stroke-width="2"/>
      <path d="M270.5 23.5 L275 23.5 L275 41.5 L252 41.5 L252 38" fill="none" stroke="#dadada" stroke-width="2"/>
      <path d="M254 21.5 L263 27.2 L254 33 Z" fill="#e6e6e6"/>
      <path d="M284 30.5 L290 30.5 L287 33.5 Z" fill="#bbb"/>
      <!-- prev/next -->
      <path d="M312.5 28.5 L342.5 11.5 Q343.5 11.2 343.5 12.5 L343.5 45 Q343.5 46.3 342.5 46 Z" fill="url(#tri)"/>
      <path d="M393 28.5 L363.5 11.5 Q362.5 11.2 362.5 12.5 L362.5 45 Q362.5 46.3 363.5 46 Z" fill="url(#tri)"/>
      <!-- rotate -->
      <path d="M436.4 29.8 A9.4 9.4 0 1 1 440.0 37.2" fill="none" stroke="url(#ico)" stroke-width="4.2"/>
      <path d="M430.3 29.0 L441.8 29.0 L435.8 34.8 Z" fill="#e4e4e4"/>
      <path d="M514.6 29.8 A9.4 9.4 0 1 0 511.0 37.2" fill="none" stroke="url(#ico)" stroke-width="4.2"/>
      <path d="M509.2 29.0 L520.7 29.0 L514.7 34.8 Z" fill="#e4e4e4"/>
      <!-- trash -->
      <rect x="552" y="16.5" width="26" height="4.3" rx="0.8" fill="#ececec"/>
      <rect x="561" y="14.8" width="8" height="3" rx="0.8" fill="#ececec"/>
      <path d="M554.2 22.5 H575.8 V41.5 Q575.8 42.8 574.5 42.8 H555.5 Q554.2 42.8 554.2 41.5 Z" fill="url(#ico)"/>
      <g fill="#1f1f1f"><rect x="558" y="25.5" width="2.3" height="14"/><rect x="563.8" y="25.5" width="2.3" height="14"/><rect x="569.7" y="25.5" width="2.3" height="14"/></g>
      <!-- partial icon -->
      <path d="M621 20.2 L613.6 20.2 L613.6 42.3 L621 42.3" fill="none" stroke="#ececec" stroke-width="3.2"/>
      <path d="M619.5 37 L621 31" stroke="#eee" stroke-width="1.5"/>
    </svg>
  </div>
</div>

</body></html>
